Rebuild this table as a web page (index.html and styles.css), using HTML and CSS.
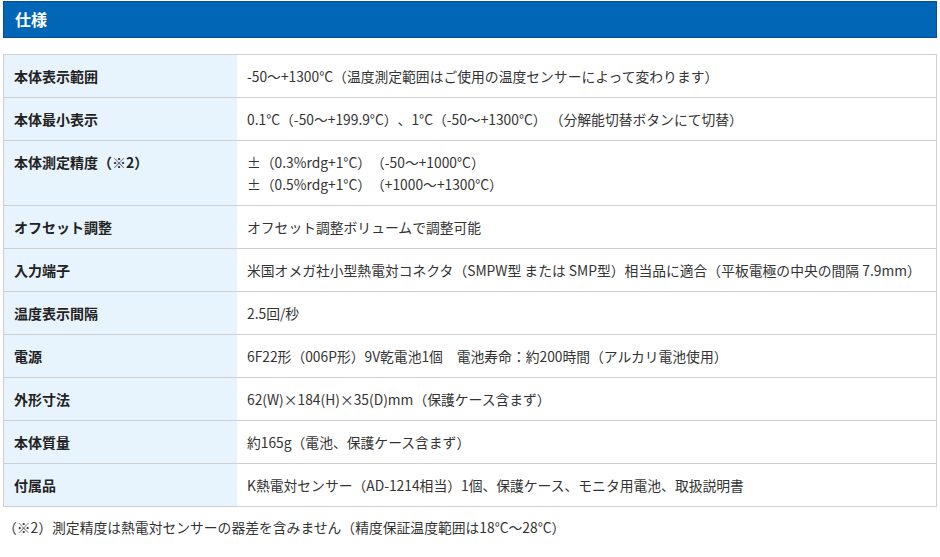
FILE: index.html
```html
<!DOCTYPE html>
<html lang="ja">
<head>
<meta charset="utf-8">
<link rel="stylesheet" href="styles.css">
</head>
<body>
<div class="wrap">
  <h2 class="title">仕様</h2>
  <table class="spec">
    <tr><th>本体表示範囲</th><td>-50〜+1300°C（温度測定範囲はご使用の温度センサーによって変わります）</td></tr>
    <tr><th>本体最小表示</th><td>0.1°C（-50〜+199.9°C）、1°C（-50〜+1300°C） （分解能切替ボタンにて切替）</td></tr>
    <tr><th>本体測定精度（※2）</th><td>±（0.3%rdg+1°C）（-50〜+1000°C）<br>±（0.5%rdg+1°C）（+1000〜+1300°C）</td></tr>
    <tr><th>オフセット調整</th><td>オフセット調整ボリュームで調整可能</td></tr>
    <tr><th>入力端子</th><td>米国オメガ社小型熱電対コネクタ（SMPW型 または SMP型）相当品に適合（平板電極の中央の間隔 7.9mm）</td></tr>
    <tr><th>温度表示間隔</th><td>2.5回/秒</td></tr>
    <tr><th>電源</th><td>6F22形（006P形）9V乾電池1個　電池寿命：約200時間（アルカリ電池使用）</td></tr>
    <tr><th>外形寸法</th><td>62(W)×184(H)×35(D)mm（保護ケース含まず）</td></tr>
    <tr><th>本体質量</th><td>約165g（電池、保護ケース含まず）</td></tr>
    <tr><th>付属品</th><td>K熱電対センサー（AD-1214相当）1個、保護ケース、モニタ用電池、取扱説明書</td></tr>
  </table>
  <p class="note">（※2）測定精度は熱電対センサーの器差を含みません（精度保証温度範囲は18°C〜28°C）</p>
</div>
</body>
</html>
```

FILE: styles.css
```css
html, body {
  margin: 0;
  padding: 0;
  background: #fff;
}
body {
  font-family: "Noto Sans CJK JP", "Noto Sans", sans-serif;
  color: #333;
  font-size: 14px;
  line-height: 22px;
  text-spacing-trim: space-all;
}
.wrap {
  padding: 1px 3px 0 3px;
  width: 934px;
}
.title {
  margin: 0;
  height: 35px;
  line-height: 35px;
  background: #0066b5;
  border: 1px solid #0a4a9a;
  color: #fff;
  font-size: 16px;
  font-weight: bold;
  padding-left: 11px;
}
.spec {
  margin-top: 16px;
  width: 934px;
  border-collapse: collapse;
  border: 1px solid #cfcfcf;
}
.spec th,
.spec td {
  border-top: 1px solid #cfcfcf;
  border-bottom: 1px solid #cfcfcf;
  padding: 10px;
  text-align: left;
  vertical-align: top;
  line-height: 22px;
}
.spec th {
  width: 213px;
  background: #e8f4fd;
  font-size: 14px;
  font-weight: bold;
  color: #222;
}
.spec td {
  font-size: 13.8px;
  font-weight: normal;
  color: #333;
}
.note {
  margin: 9px 0 0 0;
  padding-left: 0;
  font-size: 13.8px;
  line-height: 22px;
}
```
